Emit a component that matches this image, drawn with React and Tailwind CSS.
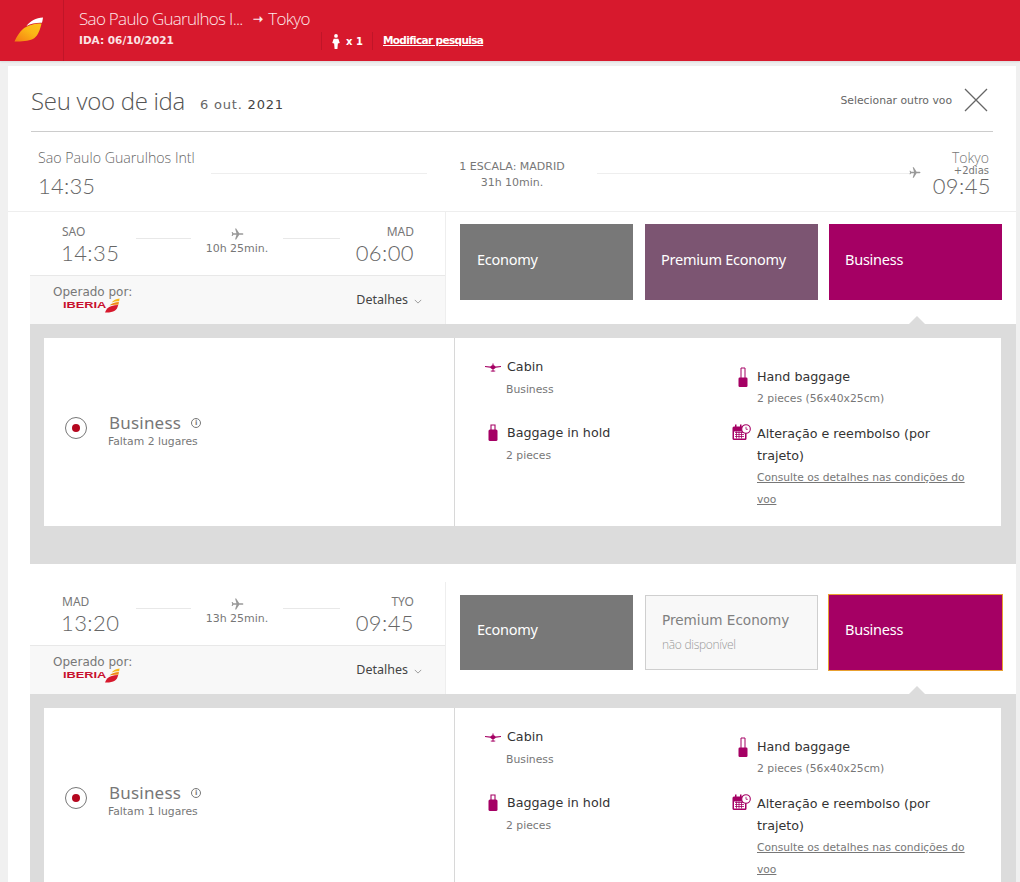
import React from "react";

const Plane = ({ className }) => (
  <svg viewBox="0 0 24 24" className={className} fill="currentColor">
    <path d="M23 12c0-.8-.8-1.3-1.6-1.3H15.8L10.6 2.5H8.7l2.4 8.2H6L4.3 8.6H2.8l1 3.4-1 3.4h1.5L6 13.300h5.100L8.700 21.500h1.900l5.200-8.200h5.600C22.200 13.300 23 12.800 23 12z" />
  </svg>
);

const CaseHold = () => (
  <svg viewBox="0 0 10 18" className="w-[10px] h-[18px]" fill="none">
    <path d="M3 7V1h4v6" stroke="#a50064" strokeWidth="1.100" />
    <rect x="0.500" y="5.500" width="9" height="11.500" rx="1.500" fill="#a50064" />
  </svg>
);

const CaseHand = () => (
  <svg viewBox="0 0 10 21" className="w-[10px] h-[21px]" fill="none">
    <path d="M3 11V1h4v10" stroke="#a50064" strokeWidth="1" />
    <rect x="0.500" y="10.500" width="9" height="9.500" rx="1.200" fill="#a50064" />
  </svg>
);

const CabinIcon = () => (
  <svg viewBox="0 0 18 10" className="w-[16px] h-[9px]" fill="#a50064">
    <path d="M0 3.300l6 .7C7 2.800 8 2.500 9 2.500s2 .3 3 1.500l6-.7v1l-6 1c-.6 1-1.500 1.500-3 1.500s-2.400-.5-3-1.500l-6-1z" />
    <rect x="8.400" y="0.500" width="1.200" height="9" />
    <rect x="6.500" y="8.500" width="5" height="1" />
  </svg>
);

const CalendarIcon = () => (
  <svg viewBox="0 0 19 17" className="w-[19px] h-[17px]">
    <rect x="0.500" y="2.500" width="14" height="13.500" rx="1.500" fill="#a50064" />
    <rect x="2" y="7.500" width="11" height="7" fill="#ffffff" />
    <path d="M3 8.500h9M3 10.500h9M3 12.500h9M4.500 7.500v7M7 7.500v7M9.500 7.500v7" stroke="#a50064" strokeWidth="0.800" />
    <rect x="3" y="0.500" width="1.500" height="4" fill="#a50064" />
    <rect x="8" y="0.500" width="1.500" height="4" fill="#a50064" />
    <circle cx="14" cy="5" r="4.300" fill="#ffffff" stroke="#a50064" strokeWidth="1.100" />
    <path d="M14 2.800V5.300h1.800" stroke="#a50064" strokeWidth="0.800" fill="none" />
  </svg>
);

const Swoosh = ({ className }) => (
  <svg viewBox="0 0 30 25" className={className}>
    <defs>
      <linearGradient id="swooshFill" x1="0" y1="1" x2="1" y2="0">
        <stop offset="0" stopColor="#f47a12" />
        <stop offset="0.55" stopColor="#fbb516" />
        <stop offset="1" stopColor="#fcc419" />
      </linearGradient>
    </defs>
    <path d="M29 0.500C22 1 16 4 12.500 9 17 6.500 23 5.500 28 5.800 28.500 4 28.800 2 29 0.500Z" fill="#ffffff" />
    <path d="M27.500 6.500C20 6.500 13 8.500 9 12 5.500 15 2.500 20 0.500 24.500 8 24.800 16 24 20.500 21 24 18.500 26.500 11.500 27.500 6.500Z" fill="url(#swooshFill)" />
  </svg>
);

const IberiaLogo = () => (
  <div className="flex items-center h-[16px]">
    <span className="text-[#c8102e] text-[9px] font-bold leading-none font-['Liberation_Sans',sans-serif] scale-x-[1.42] origin-left w-[41px]">IBERIA</span>
    <svg viewBox="0 0 18 17" className="w-[17px] h-[15px]">
      <path d="M17 .5C13 1 10 2.500 8 5c3-1 6-1.500 8.500-1.300z" fill="#f6b516" />
      <path d="M16.300 4.500C12 4.500 8 6 5.500 8.500c2.500-.7 6-1 10.200-.8z" fill="#f08a16" />
      <path d="M15.500 8C10 8 5.500 9.500 3 12 2 13.300 1 15 .5 16.500 5 16.800 9 16 11.500 14.500 13.500 13.200 14.800 11 15.500 8z" fill="#d7192d" />
    </svg>
  </div>
);

const Tab = ({ label, bg, extra }) => (
  <div className={`flex items-center pb-[5px] text-white text-[14.5px] font-['Noto_Sans',sans-serif] tracking-[-0.25px] ${bg} ${extra}`}>
    {label}
  </div>
);

const Feature = ({ icon, title, sub, left }) => (
  <div className="flex flex-col">
    <div className="flex items-center h-[22px] relative">
      <span className="absolute -left-[26px] w-[24px] flex justify-center">{icon}</span>
      <span className="text-[12.700px] text-[#333]">{title}</span>
    </div>
    <div className={`text-[10.800px] text-[#777] leading-[22px] ${left ? "mt-[1px] -ml-[1px]" : ""}`}>{sub}</div>
  </div>
);

const Segment = ({ from, to, dep, arr, dur, seats, second }) => (
  <section>
    <div className="flex h-[112px] pl-[22px]">
      <div className="w-[415px] flex flex-col">
        <div className="h-[64px] border-b border-[#e8e8e8] flex justify-between px-[31px]">
          <div className="pt-[12px] w-[75px]">
            <div className="text-[12px] leading-[15px] text-[#777] font-['Noto_Sans',sans-serif] pl-[1px]">{from}</div>
            <div className="text-[22px] leading-[28px] font-light text-[#666] font-['Lato',sans-serif] tracking-[0.4px]">{dep}</div>
          </div>
          <div className="flex-1 flex items-start pt-[26px] justify-center relative">
            <div className="w-[55px] h-px bg-[#e8e8e8]" />
            <div className="w-[92px] -mt-[11px] flex flex-col items-center pl-[1px]">
              <Plane className="w-[14px] h-[14px] text-[#999]" />
              <div className="text-[11px] text-[#777] leading-[14px] mt-[1px] whitespace-nowrap">{dur}</div>
            </div>
            <div className="w-[57px] h-px bg-[#e8e8e8]" />
          </div>
          <div className="pt-[12px] w-[75px] text-right">
            <div className="text-[12px] leading-[15px] text-[#777] font-['Noto_Sans',sans-serif]">{to}</div>
            <div className="text-[22px] leading-[28px] font-light text-[#666] font-['Lato',sans-serif] tracking-[0.4px]">{arr}</div>
          </div>
        </div>
        <div className="h-[48px] bg-[#f8f8f8] flex justify-between px-[23px]">
          <div className="pt-[8px]">
            <div className="text-[12px] leading-[16px] text-[#777]">Operado por:</div>
            <div className="pl-[10px] -mt-[3px]"><IberiaLogo /></div>
          </div>
          <div className="flex items-center gap-[6px] text-[12.500px] text-[#444] font-['Noto_Sans',sans-serif]">
            Detalhes
            <svg viewBox="0 0 10 6" className="w-[8px] h-[5px] mt-[2px]" fill="none" stroke="#888"><path d="M1 1l4 4 4-4" /></svg>
          </div>
        </div>
      </div>
      <div className="flex-1 border-l border-[#eeeeee] relative">
        <div className={`flex pl-[14px] ${second ? "pt-[13px]" : "pt-[12px]"}`}>
          <Tab label="Economy" bg="bg-[#787878]" extra={second ? "pl-[17px] w-[173px] h-[75px]" : "pl-[17px] w-[173px] h-[76px]"} />
          {second ? (
            <div className="w-[173px] h-[75px] ml-[12px] bg-[#f8f8f8] border border-[#cfcfcf] pl-[16px] pt-[15px]">
              <div className="text-[13.600px] leading-[18px] text-[#808080]">Premium Economy</div>
              <div className="text-[12px] leading-[16px] mt-[8px] text-[#999] font-light font-['Open_Sans',sans-serif] tracking-[-0.3px]">não disponível</div>
            </div>
          ) : (
            <Tab label="Premium Economy" bg="bg-[#7c5572]" extra="pl-[16px] w-[173px] h-[76px] ml-[12px]" />
          )}
          <Tab
            label="Business"
            bg="bg-[#a50064]"
            extra={second ? "pl-[16px] w-[175px] h-[77px] -mt-px ml-[10px] border border-[#e8a030]" : "pl-[16px] w-[173px] h-[76px] ml-[11px]"}
          />
        </div>
        <div className="absolute left-[463px] bottom-0 w-0 h-0 border-l-[8px] border-r-[8px] border-b-[8px] border-l-transparent border-r-transparent border-b-[#dcdcdc]" />
      </div>
    </div>
    <div className="ml-[22px] bg-[#dcdcdc] p-[14px] pr-[15px] pb-[38px]">
      <div className="bg-white h-[188px] flex">
        <div className="w-[411px] border-r border-[#d8d8d8] flex items-center pl-[21px] pb-[9px]">
          <div className="w-[22px] h-[22px] rounded-full border border-[#777] flex items-center justify-center">
            <div className="w-[8px] h-[8px] rounded-full bg-[#b5071f]" />
          </div>
          <div className="ml-[20px] mt-[5px]">
            <div className="flex items-center pl-[2px]">
              <span className="text-[17px] leading-[22px] text-[#777] font-['Noto_Sans',sans-serif] tracking-[0.2px]">Business</span>
              <span className="ml-[10px] w-[10px] h-[10px] rounded-full border border-[#777] text-[#777] text-[7px] leading-[8px] text-center font-bold">i</span>
            </div>
            <div className="text-[10.800px] text-[#777] leading-[15px] pl-[1px]">{seats}</div>
          </div>
        </div>
        <div className="flex-1 grid grid-cols-[250px_1fr] pl-[52px] pr-[30px] pt-[19px]">
          <div className="flex flex-col gap-[21px] -mt-[1px]">
            <Feature left icon={<CabinIcon />} title="Cabin" sub="Business" />
            <Feature left icon={<CaseHold />} title="Baggage in hold" sub="2 pieces" />
          </div>
          <div className="flex flex-col pt-[9px]">
            <Feature icon={<CaseHand />} title="Hand baggage" sub="2 pieces (56x40x25cm)" />
            <div className="relative mt-[13px]">
              <span className="absolute -left-[25px] top-[1px]"><CalendarIcon /></span>
              <div className="text-[12.700px] text-[#333] leading-[22px]">Alteração e reembolso (por trajeto)</div>
              <div className="text-[10.700px] text-[#777] leading-[22px] underline">Consulte os detalhes nas condições do voo</div>
            </div>
          </div>
        </div>
      </div>
    </div>
  </section>
);

export default function App() {
  return (
    <div className="w-[1020px] h-[882px] overflow-hidden bg-[#f0f0f0] font-['DejaVu_Sans',sans-serif]">
      <header className="h-[61px] bg-[#d7192d] flex shadow-[0_1px_2px_rgba(0,0,0,0.1)]">
        <div className="w-[64px] border-r border-[#c01528] flex items-center pl-[14px] pb-[2px]">
          <Swoosh className="w-[30px] h-[25px]" />
        </div>
        <div className="pl-[15px] pt-[8px] text-white">
          <div className="text-[17px] leading-[22px] font-light font-['Open_Sans',sans-serif] tracking-[-0.7px] text-[#fde8ea] flex items-center">
            <span className="w-[167px] whitespace-nowrap">Sao Paulo Guarulhos I...</span>
            <span className="ml-[7px] mr-[6px] text-[12px] font-bold">➝</span>
            Tokyo
          </div>
          <div className="flex items-center mt-[1px] h-[20px]">
            <span className="text-[10.500px] font-semibold text-[#fbe3e5] w-[242px]">IDA: 06/10/2021</span>
            <div className="w-[51px] h-[18px] border-l border-[#c01528] flex items-center pl-[10px] gap-[6px] text-[10px] font-semibold">
              <svg viewBox="0 0 8 16" className="w-[8px] h-[15px]" fill="#fff"><circle cx="4" cy="2" r="2" /><path d="M1.500 5h5L8 9.500 6 10l-.5 6h-3L2 10 0 9.500z" /></svg>
              x 1
            </div>
            <div className="h-[18px] border-l border-[#c01528] flex items-center pl-[10px] text-[10.500px] font-semibold tracking-[-0.65px] underline whitespace-nowrap">Modificar pesquisa</div>
          </div>
        </div>
      </header>
      <main className="mt-[5px] ml-[8px] w-[1008px] bg-white">
        <div className="mx-[23px] h-[66px] border-b border-[#cccccc] flex items-start justify-between">
          <div className="flex items-baseline pt-[19px]">
            <h1 className="text-[24px] leading-[32px] font-light font-['Open_Sans',sans-serif] text-[#555] tracking-[-0.3px]">Seu voo de ida</h1>
            <span className="ml-[15px] text-[13px] text-[#666] tracking-[0.8px] -translate-y-px">6 out. <span className="text-[#444]">2021</span></span>
          </div>
          <div className="flex items-center pt-[22px] gap-[12px] pr-[5px]">
            <span className="text-[10.800px] text-[#666] mt-[3px]">Selecionar outro voo</span>
            <svg viewBox="0 0 24 24" className="w-[24px] h-[24px]" fill="none" stroke="#666" strokeWidth="1.300"><path d="M1 1l22 22M23 1L1 23" /></svg>
          </div>
        </div>
        <div className="h-[80px] border-b border-[#eeeeee] flex pl-[30px] pr-[27px]">
          <div className="w-[172px] pt-[17px]">
            <div className="text-[14.200px] leading-[18px] font-light font-['Open_Sans',sans-serif] text-[#666] whitespace-nowrap">Sao Paulo Guarulhos Intl</div>
            <div className="text-[22px] leading-[28px] font-light font-['Lato',sans-serif] text-[#666] tracking-[0.2px] mt-[5px]">14:35</div>
          </div>
          <div className="w-[216px] h-px bg-[#eeeeee] mt-[41px] ml-[1px]" />
          <div className="w-[170px] pt-[27px] text-center text-[11px] leading-[16px] text-[#777]">
            <div>1 ESCALA: MADRID</div>
            <div>31h 10min.</div>
          </div>
          <div className="flex-1 flex items-start">
            <div className="w-[313px] h-px bg-[#eeeeee] mt-[41px]" />
            <Plane className="w-[13px] h-[13px] text-[#999] mt-[34px] -ml-[2px]" />
          </div>
          <div className="w-[62px] pt-[18px] text-right">
            <div className="text-[14px] leading-[15px] font-light font-['Open_Sans',sans-serif] text-[#777] whitespace-nowrap">Tokyo</div>
            <div className="text-[10px] leading-[10px] text-[#777] mt-[1px]">+2dias</div>
            <div className="text-[22px] leading-[24px] font-light font-['Lato',sans-serif] text-[#666] tracking-[0.4px] -mt-[2px] -mr-[2px]">09:45</div>
          </div>
        </div>
        <Segment from="SAO" to="MAD" dep="14:35" arr="06:00" dur="10h 25min." seats="Faltam 2 lugares" />
        <div className="h-[18px]" />
        <Segment from="MAD" to="TYO" dep="13:20" arr="09:45" dur="13h 25min." seats="Faltam 1 lugares" second />
      </main>
    </div>
  );
}
